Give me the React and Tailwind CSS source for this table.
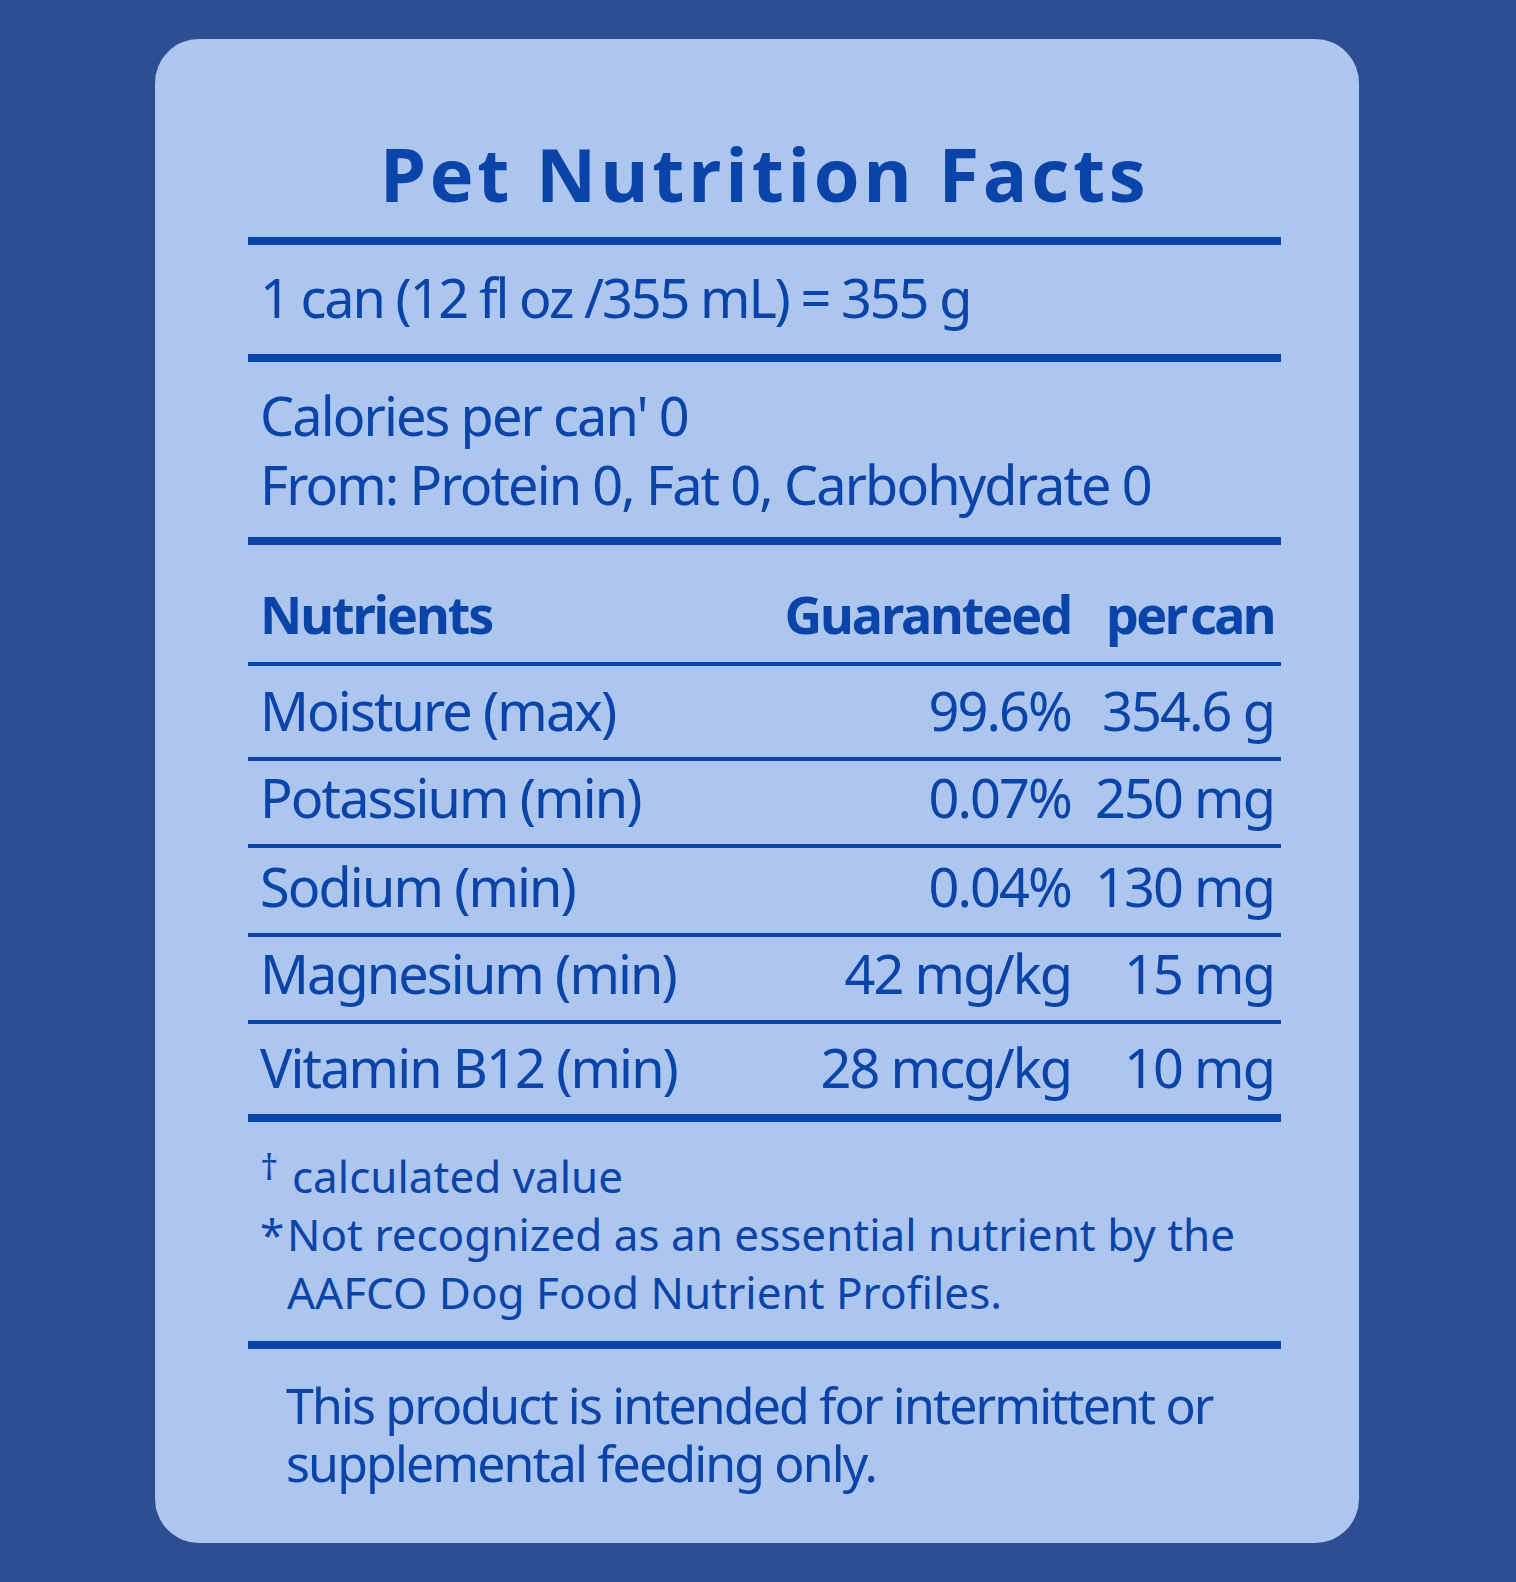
import React from "react";

const rows = [
  { name: "Moisture (max)", g: "99.6%", c: "354.6 g", h: "h-[91px]" },
  { name: "Potassium (min)", g: "0.07%", c: "250 mg", h: "h-[83px]" },
  { name: "Sodium (min)", g: "0.04%", c: "130 mg", h: "h-[85px]" },
  { name: "Magnesium (min)", g: "42 mg/kg", c: "15 mg", h: "h-[83px]" },
  { name: "Vitamin B12 (min)", g: "28 mcg/kg", c: "10 mg", h: "h-[90px]" },
];

const Thick = () => <div className="h-[8px] bg-[#0a44a8]" />;
const Thin = () => <div className="h-[4px] bg-[#0a44a8]" />;

const App = () => {
  return (
    <div className="min-h-[1582px] w-[1516px] bg-[#2e4e94] pt-[39px] pl-[155px]">
      <div className="w-[1204px] h-[1504px] rounded-[44px] bg-[#adc6f0] pl-[93px] pr-[78px] text-[#0a44a8] font-['Noto_Sans',sans-serif] font-stretch-semi-condensed">
        {/* title */}
        <div className="h-[198px] flex items-end justify-center pb-[26px]">
          <h1 className="text-[74px] leading-none font-bold tracking-[0.05em] font-['Open_Sans',sans-serif] font-stretch-normal">
            Pet Nutrition Facts
          </h1>
        </div>
        <Thick />
        <div className="h-[109px] flex items-end pl-[12px] pb-[30px]">
          <p className="text-[54px] leading-none tracking-[-0.04em]">
            1 can (12 fl oz /355 mL) = 355 g
          </p>
        </div>
        <Thick />
        <div className="h-[175px] pl-[12px] pt-[19px] text-[54px] leading-[69px] tracking-[-0.035em]">
          <p>Calories per can' 0</p>
          <p>From: Protein 0, Fat 0, Carbohydrate 0</p>
        </div>
        <Thick />
        <div className="h-[117px] flex items-end pl-[12px] pr-[7px] pb-[22px] font-bold text-[52px] leading-none tracking-[-0.04em]">
          <span className="flex-1">Nutrients</span>
          <span className="text-right">Guaranteed</span>
          <span className="w-[203px] text-right tracking-[-0.05em] [word-spacing:-0.12em]">per can</span>
        </div>
        <Thin />
        {rows.map((r, i) => (
          <div key={r.name}>
            <div
              className={`${r.h} flex items-end pl-[12px] pr-[7px] pb-[20px] text-[54px] leading-none tracking-[-0.035em]`}
            >
              <span className="flex-1">{r.name}</span>
              <span className="text-right">{r.g}</span>
              <span className="w-[203px] text-right">{r.c}</span>
            </div>
            {i < rows.length - 1 ? <Thin /> : <Thick />}
          </div>
        ))}
        <div className="h-[219px] pl-[12px] pt-[25px] text-[44px] leading-[58px]">
          <p className="flex">
            <span className="w-[32px] text-[36px] leading-[40px]">†</span>
            <span>calculated value</span>
          </p>
          <p className="flex">
            <span className="w-[27px]">*</span>
            <span>Not recognized as an essential nutrient by the</span>
          </p>
          <p className="pl-[27px]">AAFCO Dog Food Nutrient Profiles.</p>
        </div>
        <Thick />
        <div className="pl-[38px] pt-[27px] text-[50px] leading-[58px] tracking-[-0.037em]">
          <p>This product is intended for intermittent or</p>
          <p>supplemental feeding only.</p>
        </div>
      </div>
    </div>
  );
};

export default App;
